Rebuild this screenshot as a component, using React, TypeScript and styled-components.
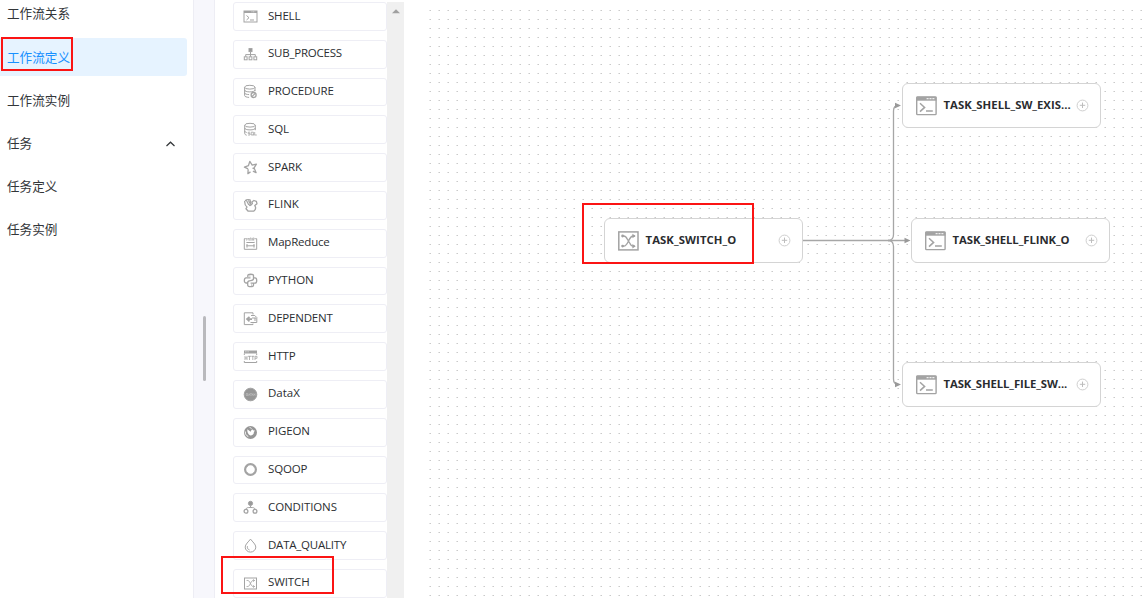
import React from 'react';
import styled, { createGlobalStyle } from 'styled-components';

const GlobalStyle = createGlobalStyle`
  * { box-sizing: border-box; }
  body {
    margin: 0;
    overflow: hidden;
    background: #fff;
    color: #2b2e31;
    font-family: 'Open Sans', 'Noto Sans CJK SC', sans-serif;
  }
`;

const Page = styled.div`
  position: relative;
  display: flex;
  width: 1144px;
  height: 598px;
  overflow: hidden;
`;

const Sidebar = styled.nav`
  display: flex;
  flex-direction: column;
  gap: 5.4px;
  flex: none;
  width: 193px;
  height: 598px;
  padding-right: 6px;
  overflow: hidden;
`;

const MenuItem = styled.div<{ $active?: boolean }>`
  display: flex;
  align-items: center;
  justify-content: space-between;
  flex: none;
  height: 37.8px;
  padding: 1px 11px 0 7px;
  border-radius: 0 3px 3px 0;
  font-size: 12.6px;
  line-height: 18px;
  background: ${(p) => (p.$active ? '#e6f3ff' : 'transparent')};
  color: ${(p) => (p.$active ? '#1890ff' : '#333639')};
  &:first-child { margin-top: -5px; }
`;

const Gutter = styled.div`
  display: flex;
  align-items: flex-start;
  flex: none;
  width: 22px;
  padding: 316px 0 0 9px;
  background: #f7f7fc;
  border: solid #ededf4;
  border-width: 0 1px;
`;

const GutterThumb = styled.div`
  width: 3px;
  height: 65px;
  border-radius: 2px;
  background: #b9b9bd;
`;

const Palette = styled.div`
  display: flex;
  flex-direction: column;
  gap: 9px;
  flex: none;
  width: 172px;
  padding: 2px 0 0 18px;
  overflow: hidden;
`;

const PaletteItem = styled.div`
  display: flex;
  align-items: center;
  flex: none;
  gap: 10px;
  height: 28.8px;
  padding-left: 9px;
  border: 1px solid #eeeef5;
  border-radius: 3px;
  font-size: 11.5px;
  line-height: 16px;
`;

const PaletteLabel = styled.span<{ $spacing: number }>`
  position: relative;
  top: -0.9px;
  letter-spacing: ${(p) => p.$spacing}px;
  white-space: nowrap;
`;

const ScrollTrack = styled.div`
  display: flex;
  justify-content: center;
  flex: none;
  width: 17px;
  margin-top: 2px;
  padding-top: 7px;
  background: #f0f0f0;
`;

const Canvas = styled.main`
  position: relative;
  flex: 1;
  overflow: hidden;
`;

const CanvasDrawing = styled.svg`
  display: block;
`;

const Node = styled.div<{ $x: number; $y: number }>`
  position: absolute;
  left: ${(p) => p.$x}px;
  top: ${(p) => p.$y}px;
  display: flex;
  align-items: center;
  width: 199px;
  height: 45px;
  padding: 0 11px 0 13px;
  border: 1.4px solid #d4d4d4;
  border-radius: 6px;
  background: #fff;
`;

const NodeLabel = styled.span<{ $spacing: number }>`
  flex: 1;
  margin: -2px 0 0 6.5px;
  font-size: 11.3px;
  font-weight: 700;
  line-height: 16px;
  color: #2a2c2f;
  letter-spacing: ${(p) => p.$spacing}px;
  white-space: nowrap;
`;

const Marker = styled.div<{ $x: number; $y: number; $w: number; $h: number }>`
  position: absolute;
  left: ${(p) => p.$x}px;
  top: ${(p) => p.$y}px;
  width: ${(p) => p.$w}px;
  height: ${(p) => p.$h}px;
  border: 2px solid #fb1414;
`;

const Glyph = styled.svg`
  display: block;
  flex: none;
  fill: none;
  stroke: #a3a3a3;
`;

const iconShapes: Record<string, React.ReactNode> = {
  shell: (
    <>
      <rect x="1" y="2" width="13" height="11" />
      <path d="M1 3h13" strokeWidth="2" />
      <path d="M3.5 6.5 6 8.7 3.5 11M7 11h4" />
      <path d="M8.5 2.8h3.7" stroke="#fff" strokeWidth=".6" strokeDasharray="1 .6" />
    </>
  ),
  sub: (
    <>
      <rect x="6" y="1.6" width="3" height="3" fill="#999" />
      <path d="M7.5 5v3M2.7 9.5V7.6h9.6v1.9M7.5 7.6v2" />
      <rect x="1.3" y="9.8" width="2.8" height="3" />
      <rect x="6.1" y="9.8" width="2.8" height="3" />
      <rect x="10.9" y="9.8" width="2.8" height="3" />
    </>
  ),
  procedure: (
    <>
      <ellipse cx="6.8" cy="3.2" rx="5.2" ry="1.9" />
      <path d="M1.6 3.2v8.3c0 1.1 2 1.8 4.5 1.9M12 3.2v4M1.6 6c0 1.2 2.3 1.9 5.2 1.9S12 7.2 12 6M1.6 8.9c0 1 2 1.6 4.5 1.7" />
      <circle cx="10.6" cy="11" r="2.5" strokeWidth="1.3" />
      <path d="m8.9 12.6 3.4-3.2" strokeWidth="1.3" />
    </>
  ),
  sql: (
    <>
      <ellipse cx="7" cy="3.2" rx="5.3" ry="1.9" />
      <path d="M1.7 3.2v8c0 1.1.7 1.7 2 2M12.3 3.2v5M1.7 6c0 1.2 2.3 1.9 5.3 1.9s5.3-.7 5.3-1.9M1.7 9c0 .7.8 1.2 2 1.5" />
      <path d="M7 10.2H5.2v1.4H7V13H5M8.2 10.2h2.2V13H8.2ZM10 12.4l1 1.2M11.7 10v3h2.1" strokeWidth=".8" />
    </>
  ),
  spark: (
    <path
      d="m5.2 9.2-.3 4.4 2.6-1.7M5.1 8.8 1.4 7.2l4-1.5 1.4-4.3 2.4 3.7 4.2-1-2.3 3.8 2 4.8-3.2-1.5M9.5 8.2l2 .6"
      strokeLinejoin="round"
      strokeWidth="1.3"
    />
  ),
  flink: (
    <>
      <path
        d="M1.7 3c-.2 3.500.9 5 2.300 6l-1 1.700 2.200 2.500h5.400c2.200-1.500 2.500-3.600 1.200-5.600l2.200-1.800-.6-2.400-2.500-.9-2 1.500.5 1.500-2.200 2.200"
        strokeLinejoin="round"
        strokeWidth="1.3"
      />
      <path d="M2 2.700c1.400-1.200 3-1.500 5-.9l.9 3-1.500 3.200M3.500 2.400 5.800 7M5.400 2.200 7 5.600" strokeWidth="1.2" />
    </>
  ),
  mapreduce: (
    <>
      <path d="M2.8 2.7H1.3v10.6h12.4V2.7h-1.5M3.4 6.5h8.2M3.4 9.8h8.2M4 8v3.6M11 8v3.6" />
      <path d="M3.7 4.7V2l1.2 1.4L6 2v2.7M7 4.7V2h1.2v2.7M9.7 4.7V2h1.5v1.3H9.7l1.6 1.5" strokeWidth=".7" />
    </>
  ),
  python: (
    <>
      <path
        d="M4.8 4V2.6C4.8.8 10.5.8 10.5 2.6v3c0 2-1.5 2.1-3 2.1S4.6 8 4.6 10H3C.8 10 .8 4.8 3 4.8h4.5M10.5 4.8H12c2.3 0 2.3 5.4 0 5.4H7.6M10.5 10.5v1.8c0 1.8-5.8 1.8-5.8 0v-2.2"
        strokeWidth="1.3"
      />
      <path d="M6.4 3h1M8 12h1" />
    </>
  ),
  dependent: (
    <>
      <path d="M10 3.5V1.8H1.3v11.8H10v-1" />
      <path d="M8 4.5h3.8l2 2v5H7.5M9 7h4M12 7v3" />
      <path d="M4 8.1h5M6.5 5.9 4 8.1l2.5 2.2" strokeWidth="1.7" />
    </>
  ),
  http: (
    <>
      <path d="M1 3h13" strokeWidth="3" />
      <path d="M1.3 4.5V6M13.7 4.5V6M1.3 12v1.5h12.4V12" />
      <path d="M2 7v4M4 7v4M2 9h2M5 7.3h3M6.5 7v4M8.3 7.3h3M9.8 7v4M12 11V7.3h2v2h-2" strokeWidth=".8" />
      <path d="M2.3 2.8h3.3" stroke="#fff" strokeWidth=".7" strokeDasharray=".8 .5" />
    </>
  ),
  datax: (
    <>
      <circle cx="7.5" cy="7.5" r="6.3" fill="#969696" />
      <path d="M3.2 6.5v2h1.4v-2ZM5.4 8.7l.8-2 .8 2M7.2 6.6h1.6M8 6.6v2.1M9 8.7l.8-2 .7 2M11 6.5l1.4 2.1M12.4 6.5 11 8.6" stroke="#ccc" strokeWidth=".5" />
    </>
  ),
  pigeon: (
    <>
      <circle cx="7.5" cy="7.5" r="6.5" fill="#969696" stroke="none" />
      <path
        d="M4.300 4.200c-.2 2.900.7 5.300 3 6.300 2.300-.1 3.700-1.600 3.600-3.600l1.100-1.300-1.500-.2c-.5-1.200-1.900-1.100-2.300.2l-.5 1.100Z"
        fill="#fff"
        stroke="none"
      />
      <path d="m6.700 2.100 1.700 1.700M2.300 6.500c-.1 2.600 1 4.200 3 5.100" stroke="#fff" strokeWidth=".9" />
    </>
  ),
  sqoop: (
    <>
      <circle cx="7.5" cy="7.5" r="5.4" strokeWidth="2.2" />
      <path d="M3.2 3.2 5 4.5M12 3.6l-1.6 1.2M3.4 12l1.3-1.6M12 11.6l-1.3-1.4" strokeWidth=".8" />
    </>
  ),
  conditions: (
    <>
      <circle cx="7.5" cy="3.4" r="2.1" fill="#999" />
      <path d="M7.5 5.5v2.2M3 9.5c.1-2 2-2 4.5-2s4.4 0 4.5 2" />
      <circle cx="3" cy="11.3" r="1.9" strokeWidth="1.3" />
      <circle cx="12" cy="11.3" r="1.9" strokeWidth="1.3" />
    </>
  ),
  quality: (
    <>
      <path d="M7.5 1.1C5.5 3.8 2.2 6.3 2.2 9.100a5.300 5 0 0 0 10.600 0c0-2.800-3.300-5.300-5.300-8Z" />
      <path d="M4.4 8.2c-.4 2.200.8 3.500 2.200 3.800" />
    </>
  ),
  switch: (
    <>
      <rect x="1.5" y="2" width="12" height="11" />
      <path d="M3.6 4.5h1.2c2.3 0 3 6 5.3 6h1.4M3.6 10.5h1.2c2.3 0 3-6 5.3-6h1.4M10.3 3.4l1.2 1.1-1.2 1.2M10.3 9.3l1.2 1.2-1.2 1.1" strokeWidth=".9" />
    </>
  ),
};

const PaletteIcon = ({ name }: { name: string }) => (
  <Glyph width="15" height="15" viewBox="0 0 15 15">{iconShapes[name]}</Glyph>
);

const NodeShellIcon = () => (
  <Glyph width="21" height="20" viewBox="0 0 21 20">
    <rect x=".7" y="1" width="19.4" height="17.6" rx=".8" strokeWidth="1.4" />
    <path d="M.5 2.7h20" strokeWidth="4" />
    <path d="M10.6 2.6h2M13.5 2.6h2M16.4 2.6h2" stroke="#eee" strokeWidth="1.3" />
    <path d="m4 7.3 4.6 4.1L4 15.6M10 14.9h6.8" strokeWidth="1.5" />
  </Glyph>
);

const NodeSwitchIcon = () => (
  <Glyph width="21" height="20" viewBox="0 0 21 20">
    <rect x=".8" y=".9" width="19.2" height="18" strokeWidth="1.5" />
    <path
      d="M4 5h1.800c1.700 0 2.700 1.300 3.500 3.200M11.700 12c.8 1.900 1.800 3.200 3.500 3.200H17M4 15.200h1.800c4.800 0 4.600-10.200 9.400-10.200H17M9.300 8.200l2.400 3.800"
      strokeWidth="1.300"
    />
    <path d="m14.4 2.8 3.3 2.2-3.3 2.2ZM14.4 13l3.3 2.2-3.3 2.2Z" fill="#a0a0a0" stroke="none" />
    <circle cx="4.6" cy="5" r="1.4" fill="#a0a0a0" stroke="none" />
    <circle cx="4.6" cy="15.1" r="1.4" fill="#a0a0a0" stroke="none" />
  </Glyph>
);

const AddIcon = () => (
  <Glyph width="13" height="13" viewBox="0 0 13 13">
    <circle cx="6.5" cy="6.5" r="5.400" stroke="#cfcfcf" />
    <path d="M3.8 6.3h5.4M6.5 3.6V9" stroke="#bdbdbd" />
  </Glyph>
);

const menu = [
  { label: '工作流关系' },
  { label: '工作流定义', active: true },
  { label: '工作流实例' },
  { label: '任务', expanded: true },
  { label: '任务定义' },
  { label: '任务实例' },
];

const tasks: { label: string; icon: string; spacing: number }[] = [
  { label: 'SHELL', icon: 'shell', spacing: -0.2 },
  { label: 'SUB_PROCESS', icon: 'sub', spacing: -0.22 },
  { label: 'PROCEDURE', icon: 'procedure', spacing: -0.1 },
  { label: 'SQL', icon: 'sql', spacing: -0.1 },
  { label: 'SPARK', icon: 'spark', spacing: -0.15 },
  { label: 'FLINK', icon: 'flink', spacing: 0 },
  { label: 'MapReduce', icon: 'mapreduce', spacing: -0.2 },
  { label: 'PYTHON', icon: 'python', spacing: 0 },
  { label: 'DEPENDENT', icon: 'dependent', spacing: -0.2 },
  { label: 'HTTP', icon: 'http', spacing: -0.1 },
  { label: 'DataX', icon: 'datax', spacing: 0 },
  { label: 'PIGEON', icon: 'pigeon', spacing: -0.1 },
  { label: 'SQOOP', icon: 'sqoop', spacing: -0.15 },
  { label: 'CONDITIONS', icon: 'conditions', spacing: -0.1 },
  { label: 'DATA_QUALITY', icon: 'quality', spacing: -0.23 },
  { label: 'SWITCH', icon: 'switch', spacing: -0.1 },
];

const nodes = [
  { label: 'TASK_SWITCH_O', x: 200, y: 218, spacing: 0.1, kind: 'switch' },
  { label: 'TASK_SHELL_SW_EXIS...', x: 498, y: 83, spacing: 0.03, kind: 'shell' },
  { label: 'TASK_SHELL_FLINK_O', x: 507, y: 218, spacing: -0.05, kind: 'shell' },
  { label: 'TASK_SHELL_FILE_SW...', x: 498, y: 362, spacing: -0.08, kind: 'shell' },
];

export default function App() {
  return (
    <Page>
      <GlobalStyle />
      <Sidebar>
        {menu.map((m) => (
          <MenuItem key={m.label} $active={m.active}>
            {m.label}
            {m.expanded && (
              <Glyph width="11" height="8" viewBox="0 0 11 8">
                <path d="m1.5 6 4-3.8 4 3.8" stroke="#333639" strokeWidth="1.2" />
              </Glyph>
            )}
          </MenuItem>
        ))}
      </Sidebar>
      <Gutter>
        <GutterThumb />
      </Gutter>
      <Palette>
        {tasks.map((t) => (
          <PaletteItem key={t.label}>
            <PaletteIcon name={t.icon} />
            <PaletteLabel $spacing={t.spacing}>{t.label}</PaletteLabel>
          </PaletteItem>
        ))}
      </Palette>
      <ScrollTrack>
        <svg width="8" height="5" viewBox="0 0 8 5">
          <path d="M0 4.3 4 .3l4 4Z" fill="#a0a0a0" />
        </svg>
      </ScrollTrack>
      <Canvas>
        <CanvasDrawing width="740" height="598">
          <defs>
            <pattern id="grid" x="25" y="10" width="9" height="9" patternUnits="userSpaceOnUse">
              <rect width="1" height="1" fill="#e2e2e2" />
              <rect x="1" width="1" height="1" fill="#cacaca" />
            </pattern>
          </defs>
          <rect x="25" y="10" width="715" height="588" fill="url(#grid)" />
          <g fill="none" stroke="#a6a6a6" strokeWidth="1.3">
            <path d="M399 240.5h104" />
            <path d="M484 240.5q5.5 0 5.5-6V111q0-5.5 5-5.5" />
            <path d="M484 240.5q5.5 0 5.5 6V379q0 5.5 5 5.5" />
          </g>
          <g fill="#999">
            <path d="m491 102.8 6 2.7-6 2.7Z" />
            <path d="m500.5 237.8 6 2.7-6 2.7Z" />
            <path d="m491 381.8 6 2.7-6 2.7Z" />
          </g>
        </CanvasDrawing>
        {nodes.map((n) => (
          <Node key={n.label} $x={n.x} $y={n.y}>
            {n.kind === 'switch' ? <NodeSwitchIcon /> : <NodeShellIcon />}
            <NodeLabel $spacing={n.spacing}>{n.label}</NodeLabel>
            <AddIcon />
          </Node>
        ))}
      </Canvas>
      <Marker $x={1} $y={37} $w={72} $h={34} />
      <Marker $x={221} $y={556} $w={113} $h={38} />
      <Marker $x={582} $y={203} $w={172} $h={61} />
    </Page>
  );
}
